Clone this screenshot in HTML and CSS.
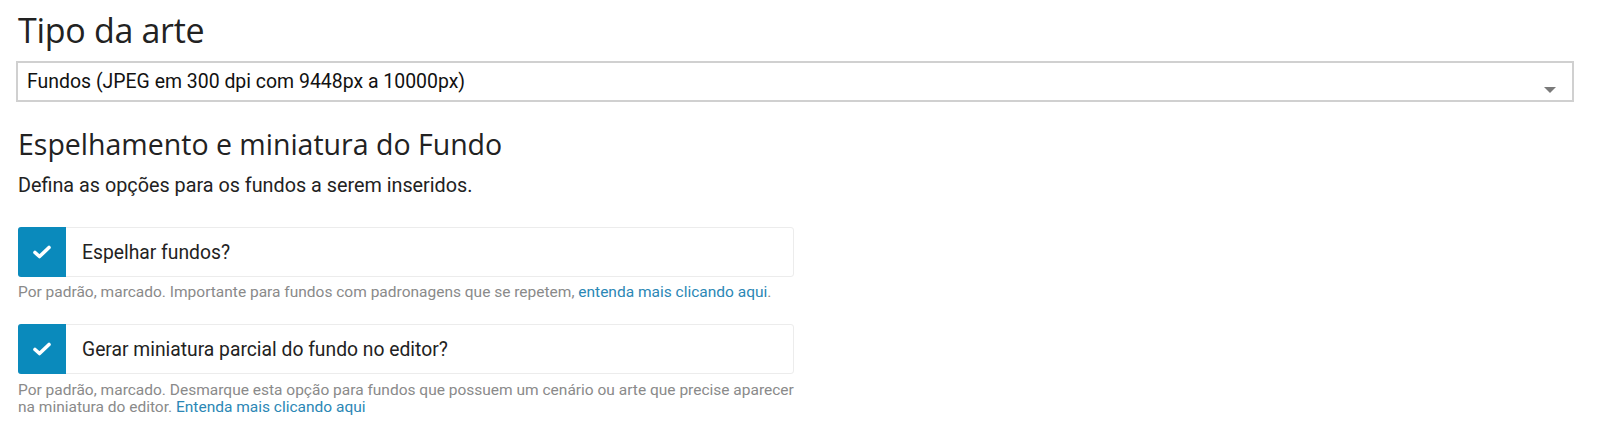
FILE: index.html
```html
<!DOCTYPE html>
<html lang="pt">
<head>
<meta charset="utf-8">
<link rel="stylesheet" href="styles.css">
</head>
<body>
<div class="page">
  <h1 class="title">Tipo da arte</h1>
  <div class="select">
    <span class="select-text">Fundos (JPEG em 300 dpi com 9448px a 10000px)</span>
    <span class="select-arrow"></span>
  </div>
  <h2 class="subtitle">Espelhamento e miniatura do Fundo</h2>
  <p class="desc">Defina as opções para os fundos a serem inseridos.</p>

  <div class="option">
    <div class="check-card">
      <span class="check-box">
        <svg width="18" height="14" viewBox="0 0 18 14"><path d="M2 7.5 L6.5 11.5 L16 2.5" fill="none" stroke="#fff" stroke-width="3.6" stroke-linecap="round" stroke-linejoin="round"/></svg>
      </span>
      <span class="check-label">Espelhar fundos?</span>
    </div>
    <p class="help help-first">Por padrão, marcado. Importante para fundos com padronagens que se repetem, <a href="#">entenda mais clicando aqui</a>.</p>
  </div>

  <div class="option">
    <div class="check-card">
      <span class="check-box">
        <svg width="18" height="14" viewBox="0 0 18 14"><path d="M2 7.5 L6.5 11.5 L16 2.5" fill="none" stroke="#fff" stroke-width="3.6" stroke-linecap="round" stroke-linejoin="round"/></svg>
      </span>
      <span class="check-label">Gerar miniatura parcial do fundo no editor?</span>
    </div>
    <p class="help">Por padrão, marcado. Desmarque esta opção para fundos que possuem um cenário ou arte que precise aparecer na miniatura do editor. <a href="#">Entenda mais clicando aqui</a></p>
  </div>
</div>
</body>
</html>
```
FILE: styles.css
```css
html, body {
  margin: 0;
  padding: 0;
  background: #fff;
}
body {
  font-family: Roboto, "Liberation Sans", sans-serif;
  color: #222;
}
.page {
  padding: 8px 26px 0 16px;
}
.title {
  font-family: "Open Sans", sans-serif;
  font-weight: 400;
  font-size: 34px;
  line-height: 44px;
  margin: 0 0 9px 2px;
  color: #222;
  letter-spacing: -0.3px;
}
.select {
  height: 37px;
  border: 2px solid #d0d0d0;
  display: flex;
  align-items: center;
  justify-content: space-between;
  padding: 0 16px 0 9px;
}
.select-text {
  font-size: 19.45px;
  color: #111;
}
.select-arrow {
  width: 0;
  height: 0;
  border-left: 6.5px solid transparent;
  border-right: 6.5px solid transparent;
  border-top: 6px solid #7a7a7a;
  margin-top: 16px;
}
.subtitle {
  font-family: "Open Sans", sans-serif;
  font-weight: 400;
  font-size: 28.5px;
  line-height: 34px;
  margin: 25px 0 0 2px;
  color: #222;
}
.desc {
  font-size: 19.8px;
  line-height: 24px;
  margin: 13px 0 0 2px;
  color: #222;
}
.option {
  width: 776px;
  margin-left: 2px;
}
.check-card {
  display: flex;
  align-items: center;
  height: 48px;
  border: 1px solid #ececec;
  border-radius: 3px;
  margin-top: 29px;
}
.option + .option .check-card {
  margin-top: 23px;
}
.check-box {
  width: 48px;
  height: 48px;
  margin: -1px 0 -1px -1px;
  padding: 1px 0;
  background: #0a8abc;
  border-radius: 3px 0 0 3px;
  display: flex;
  align-items: center;
  justify-content: center;
}
.check-label {
  font-size: 19.3px;
  color: #222;
  margin-left: 16px;
}
.help {
  font-size: 15.5px;
  line-height: 17px;
  color: #8a8a8a;
  margin: 8px 0 0 0;
}
.help-first {
  margin-top: 7px;
}
.help a {
  color: #2b87b5;
  text-decoration: none;
}
```
